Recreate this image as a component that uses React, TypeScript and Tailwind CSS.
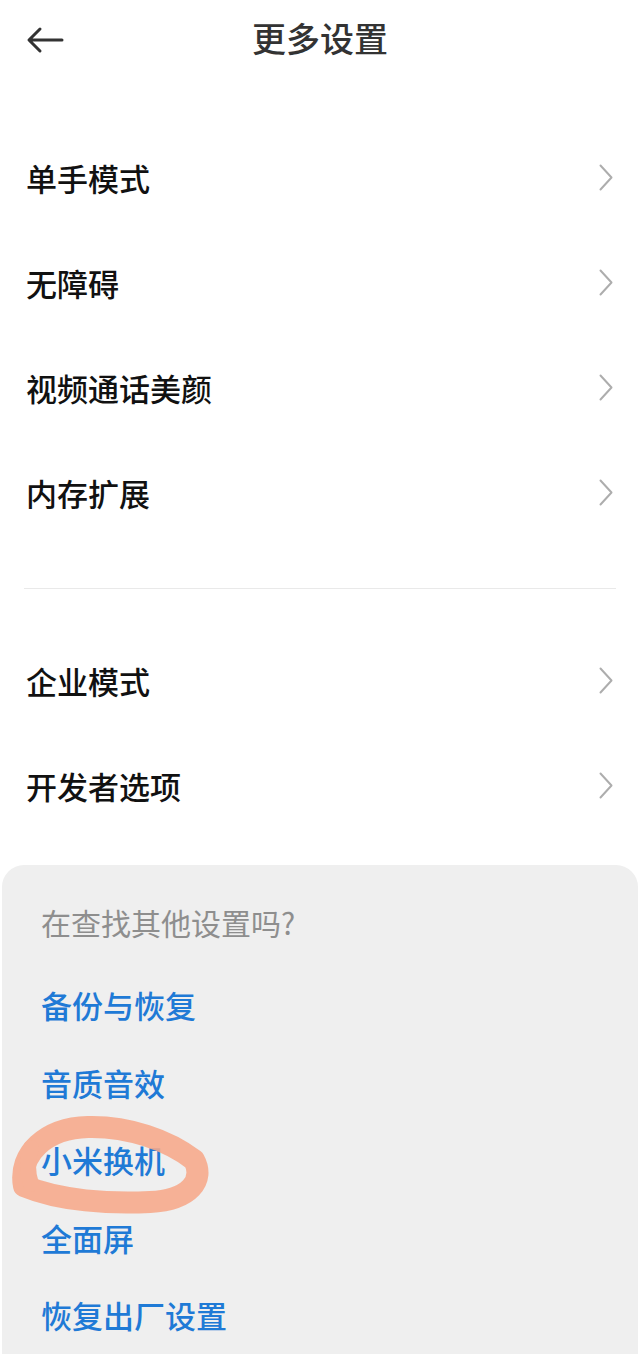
import React from 'react';

const mainGroups: string[][] = [
    ['单手模式', '无障碍', '视频通话美颜', '内存扩展'],
    ['企业模式', '开发者选项'],
];

const links = ['备份与恢复', '音质音效', '小米换机', '全面屏', '恢复出厂设置'];

const font = { fontFamily: '"Noto Sans CJK SC", "Noto Sans", sans-serif' };

function BackArrow() {
    return (
        <svg width="38" height="28" viewBox="0 0 38 28" fill="none">
            <path d="M36 14H3.5M14 3L3 14l11 11" stroke="#333" strokeWidth="3" strokeLinecap="round" strokeLinejoin="round" />
        </svg>
    );
}

function Chevron() {
    return (
        <svg width="14" height="27" viewBox="0 0 14 27" fill="none">
            <path d="M1.5 1.5L12.5 13.5L1.5 25.5" stroke="#adadad" strokeWidth="2" strokeLinecap="round" strokeLinejoin="round" />
        </svg>
    );
}

// hand-drawn marker ring round one of the links
function Scribble() {
    return (
        <svg
            className="pointer-events-none absolute left-[-41px] top-[-21px]"
            width="230"
            height="130"
            viewBox="0 0 230 130"
            fill="none"
        >
            <g opacity="0.88" stroke="#f7a98a" strokeLinecap="round" strokeLinejoin="round">
                <path
                    d="M24 86C18 54 46 28 88 27C128 26 168 40 194 60C205 80 190 100 150 102C110 104 60 101 24 86Z"
                    strokeWidth="22"
                />
                <path d="M31 48C27 60 27 72 31 84" strokeWidth="16" />
            </g>
        </svg>
    );
}

export default function App() {
    return (
        <div className="min-h-[1354px] w-[640px] overflow-hidden bg-white" style={font}>
            <div className="grid h-20 grid-cols-[1fr_auto_1fr] items-center">
                <div className="pl-[26px]">
                    <BackArrow />
                </div>
                <h1 className="-mt-1 text-[34px] font-medium leading-none text-[#333]">更多设置</h1>
                <div />
            </div>

            <div className="pt-[45px]">
                {mainGroups.map((group, gi) => (
                    <div key={gi}>
                        {gi > 0 && <div className="mx-6 mb-[39px] mt-[43px] h-px bg-[#e9e9e9]" />}
                        {group.map(label => (
                            <div key={label} className="flex h-[105px] items-center justify-between pl-[26px] pr-[27px]">
                                <span className="text-[31px] font-medium leading-none text-[#111]">{label}</span>
                                <Chevron />
                            </div>
                        ))}
                    </div>
                ))}
            </div>

            <div className="ml-[2px] mr-[2px] mt-[27px] rounded-t-[22px] bg-[#efefef] pb-10 pl-[39px] pt-[37px]">
                <p className="h-10 text-[30px] leading-10 text-[#8e8e8e]">在查找其他设置吗?</p>
                <div className="mt-[24px]">
                    {links.map(label => (
                        <div key={label} className="relative flex h-[77.5px] items-center">
                            <span className="text-[31px] font-medium leading-none text-[#1f7ad6]">{label}</span>
                            {label === '小米换机' && <Scribble />}
                        </div>
                    ))}
                </div>
            </div>
        </div>
    );
}
